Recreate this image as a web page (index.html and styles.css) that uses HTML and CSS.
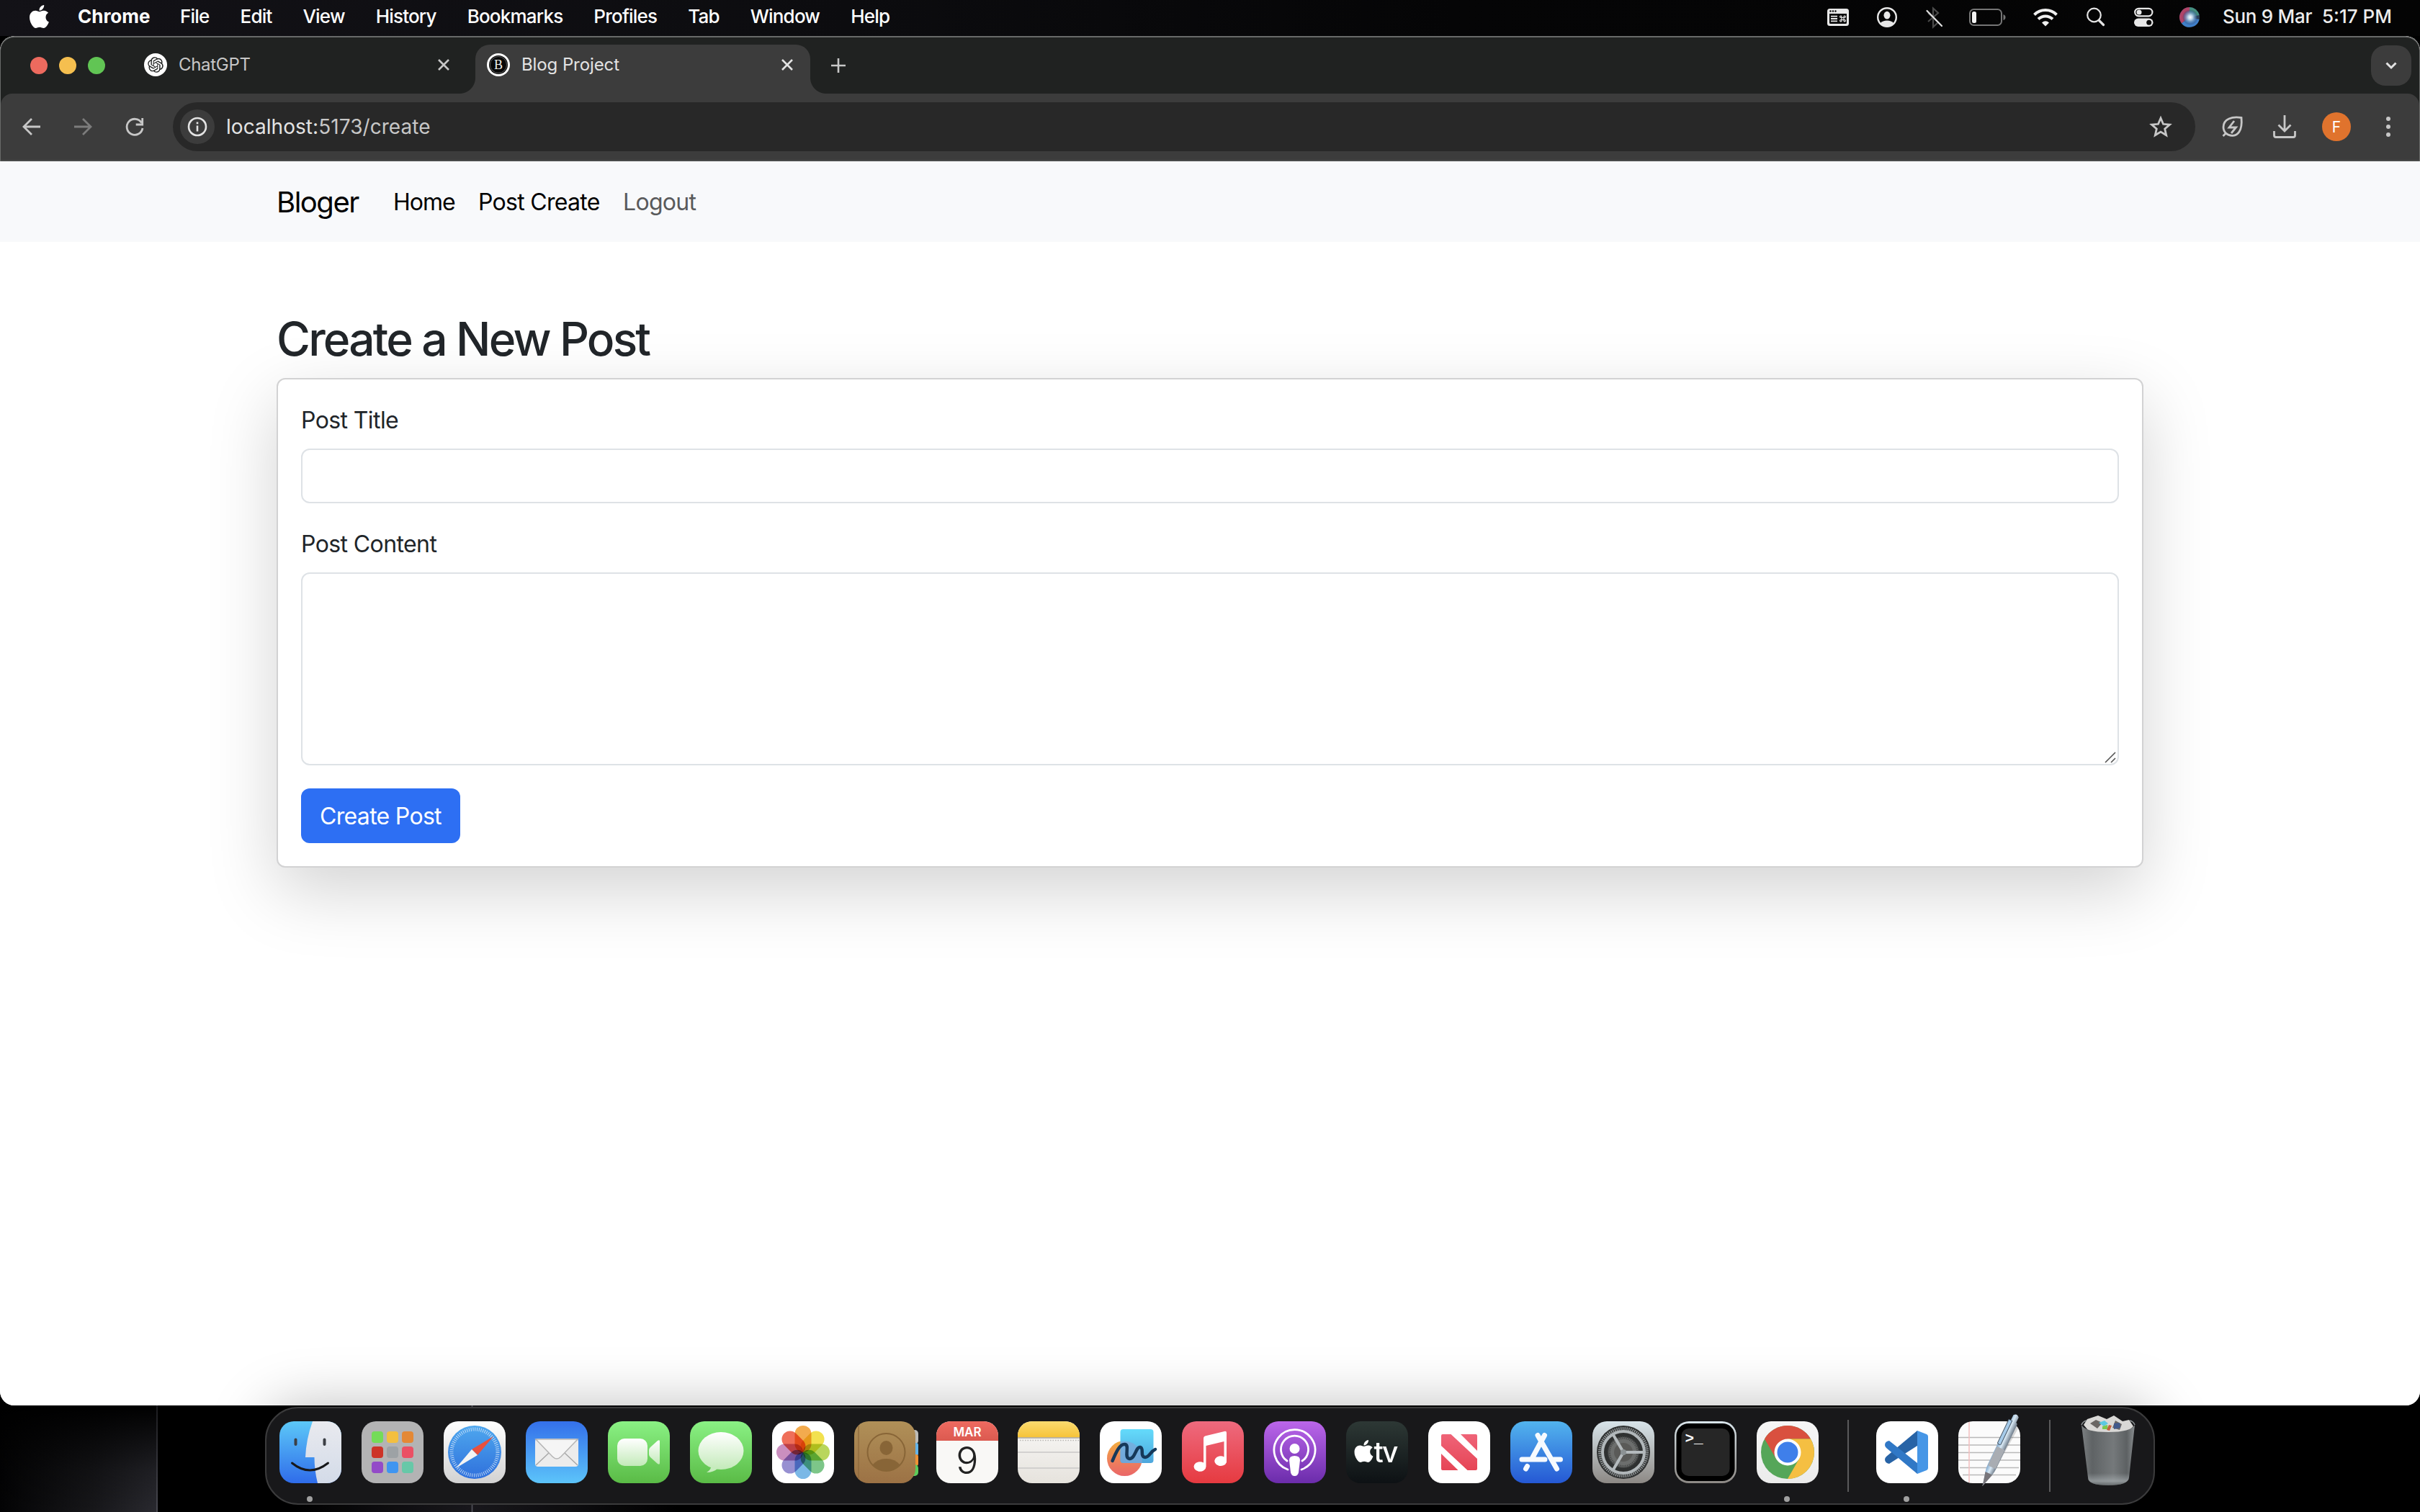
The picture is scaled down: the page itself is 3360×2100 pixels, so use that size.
FILE: index.html
```html
<!DOCTYPE html>
<html lang="en">
<head>
<meta charset="utf-8">
<title>Blog Project</title>
<link rel="stylesheet" href="styles.css">
</head>
<body>
<svg class="defs" width="0" height="0" aria-hidden="true">
  <defs>
    <path id="apple" d="M318.7 268.7c-.2-36.7 16.4-64.4 50-84.8-18.8-26.9-47.2-41.7-84.7-44.6-35.5-2.8-74.3 20.7-88.5 20.7-15 0-49.4-19.7-76.4-19.7C63.3 141.2 4 184.8 4 273.5q0 39.3 14.4 81.2c12.8 36.7 59 126.7 107.2 125.2 25.2-.6 43-17.9 75.8-17.9 31.8 0 48.3 17.9 76.4 17.9 48.6-.7 90.4-82.5 102.6-119.3-65.2-30.7-61.7-90-61.7-91.9zm-56.6-164.2c27.3-32.4 24.8-61.9 24-72.5-24.1 1.4-52 16.4-67.9 34.9-17.5 19.8-27.8 44.3-25.6 71.9 26.1 2 49.9-11.4 69.5-34.3z"/>
    <linearGradient id="blueDown" x2="0" y2="1"><stop stop-color="#5cc8f8"/><stop offset="1" stop-color="#2f6cea"/></linearGradient>
    <linearGradient id="blueUp" x2="0" y2="1"><stop stop-color="#3470ea"/><stop offset="1" stop-color="#5cc4fa"/></linearGradient>
    <linearGradient id="pale" x2="0" y2="1"><stop stop-color="#e9eaef"/><stop offset="1" stop-color="#d3dbe8"/></linearGradient>
    <linearGradient id="silver" x2="0" y2="1"><stop stop-color="#fff"/><stop offset="1" stop-color="#d2d2d2"/></linearGradient>
    <linearGradient id="green" x2="0" y2="1"><stop stop-color="#8af184"/><stop offset="1" stop-color="#5abb46"/></linearGradient>
    <linearGradient id="glass" x2="0" y2="1"><stop stop-color="#fff"/><stop offset="1" stop-color="#c3eab9"/></linearGradient>
    <linearGradient id="safari" x2="0" y2="1"><stop stop-color="#4ea7ee"/><stop offset="1" stop-color="#2f70dc"/></linearGradient>
    <linearGradient id="leather" x2="0" y2="1"><stop stop-color="#b09058"/><stop offset="1" stop-color="#9c7245"/></linearGradient>
    <linearGradient id="calRed" x2="0" y2="1"><stop stop-color="#ee6a60"/><stop offset="1" stop-color="#db5a50"/></linearGradient>
    <linearGradient id="yellow" x2="0" y2="1"><stop stop-color="#fbdb70"/><stop offset="1" stop-color="#f6c338"/></linearGradient>
    <linearGradient id="paper" x2="0" y2="1"><stop stop-color="#f9f8f7"/><stop offset="1" stop-color="#e6e3dd"/></linearGradient>
    <linearGradient id="cyan" x2="0" y2="1"><stop stop-color="#64dbfb"/><stop offset="1" stop-color="#4ea6dc"/></linearGradient>
    <linearGradient id="peach" x2="0" y2="1"><stop stop-color="#f2ae3e"/><stop offset=".6" stop-color="#ee7f5c"/><stop offset="1" stop-color="#ea6668"/></linearGradient>
    <linearGradient id="music" x2="0" y2="1"><stop stop-color="#ee6a7e"/><stop offset="1" stop-color="#e63a40"/></linearGradient>
    <linearGradient id="purple" x2="0" y2="1"><stop stop-color="#bb66ea"/><stop offset="1" stop-color="#6b2cab"/></linearGradient>
    <linearGradient id="tv" x2="0" y2="1"><stop stop-color="#2d3835"/><stop offset="1" stop-color="#0d1114"/></linearGradient>
    <linearGradient id="news" x2="0" y2="1"><stop stop-color="#ef6478"/><stop offset="1" stop-color="#e64556"/></linearGradient>
    <linearGradient id="store" x2="0" y2="1"><stop stop-color="#52b4ee"/><stop offset="1" stop-color="#2558d4"/></linearGradient>
    <linearGradient id="steel" x2="0" y2="1"><stop stop-color="#d8e4ea"/><stop offset="1" stop-color="#8d8985"/></linearGradient>
    <linearGradient id="chromeBg" x2="0" y2="1"><stop stop-color="#f6f6f6"/><stop offset="1" stop-color="#ebebeb"/></linearGradient>
    <linearGradient id="bin" x2="1" y2="0"><stop stop-color="#7c8082"/><stop offset=".2" stop-color="#5f6365"/><stop offset=".6" stop-color="#75797b"/><stop offset=".85" stop-color="#5d6163"/><stop offset="1" stop-color="#8a8e90"/></linearGradient>
    <linearGradient id="binBase" x2="0" y2="1"><stop offset=".8" stop-color="#a9b0b3" stop-opacity="0"/><stop offset=".93" stop-color="#a9b0b3" stop-opacity=".65"/><stop offset="1" stop-color="#5f6466" stop-opacity=".6"/></linearGradient>
    <linearGradient id="pen" x2="1" y2="0"><stop stop-color="#7fa9cf"/><stop offset=".45" stop-color="#d8e8f4"/><stop offset="1" stop-color="#6f7c8a"/></linearGradient>
    <radialGradient id="siri"><stop stop-color="#fff"/><stop offset=".3" stop-color="#b9d3e6"/><stop offset=".75" stop-color="#4a74a8" stop-opacity=".6"/><stop offset="1" stop-color="#224" stop-opacity="0"/></radialGradient>
  </defs>
</svg>
<div class="desktop">

  <header class="menubar">
    <svg class="apple" viewBox="4 32 377 448"><use href="#apple"/></svg>
    <nav class="menus">
      <span class="app">Chrome</span><span>File</span><span>Edit</span><span>View</span><span>History</span><span>Bookmarks</span><span>Profiles</span><span>Tab</span><span>Window</span><span>Help</span>
    </nav>
    <div class="status">
      <svg class="s-kbd" viewBox="0 0 30 28"><rect y="2" width="30" height="24" rx="3.5" fill="#e8e8e8"/><path d="M3 9h24v12.500q0 1.500-1.500 1.500h-21q-1.500 0-1.500-1.500z" fill="#0a0a0a"/><g fill="#0a0a0a"><circle cx="4.500" cy="5.500" r="1.200"/><circle cx="8" cy="5.500" r="1.200"/><circle cx="11.500" cy="5.500" r="1.200"/></g><path d="M5 12.700h9M5 16h9M5 19.300h9" stroke="#e8e8e8" stroke-width="1.800"/><path d="M20 14.500h3v3h-3zM20 14.500h-1.500a1.200 1.200 0 1 1 1.500-1.500zM23 14.500V13a1.200 1.200 0 1 1 1.500 1.500zM23 17.500h1.500a1.200 1.200 0 1 1-1.500 1.500zM20 17.500V19a1.200 1.200 0 1 1-1.500-1.500z" fill="none" stroke="#e8e8e8" stroke-width="1.200"/></svg>
      <svg class="s-user" viewBox="0 0 28 28"><circle cx="14" cy="14" r="12.800" fill="none" stroke="#e8e8e8" stroke-width="2.400"/><ellipse cx="14" cy="11.200" rx="4.500" ry="5.400" fill="#e8e8e8"/><path d="M4.500 22.500C7 19.500 10 18.500 14 18.500s7 1 9.500 4C21 25.500 18 27 14 27s-7-1.500-9.500-4.500z" fill="#e8e8e8"/></svg>
      <svg class="s-bt" viewBox="0 0 24 28" fill="none"><path d="M3 20l14-12-7-6.500v26l7-6.500L3 8" stroke="#4a4a4a" stroke-width="2.200"/><path d="M1.500 5l20.500 21" stroke="#e0e0e0" stroke-width="2.200" stroke-linecap="round"/></svg>
      <svg class="s-bat" viewBox="0 0 51 28"><rect x="1" y="3" width="44" height="22" rx="5.500" fill="none" stroke="#757575" stroke-width="2"/><rect x="4" y="6" width="6" height="16" rx="2.500" fill="#f2f2f2"/><path d="M47.500 10q3 1 3 4t-3 4z" fill="#757575"/></svg>
      <svg class="s-wifi" viewBox="0 0 34 28" fill="none" stroke="#f0f0f0"><path d="M1.500 10.500a22 22 0 0 1 31 0" stroke-width="4"/><path d="M7 16.500a14.200 14.200 0 0 1 20 0" stroke-width="4"/><path d="M17 26.500l-5-5q5-4.500 10 0z" fill="#f0f0f0" stroke="none"/></svg>
      <svg class="s-find" viewBox="0 0 25 28" fill="none" stroke="#e4e4e4"><circle cx="10.500" cy="11" r="9.300" stroke-width="2.200"/><path d="M17.500 18.500l6 6" stroke-width="3.200" stroke-linecap="round"/></svg>
      <svg class="s-cc" viewBox="0 0 27 28"><rect x="1.200" y="1.800" width="24.200" height="10.500" rx="5.200" fill="none" stroke="#e8e8e8" stroke-width="2.200"/><circle cx="7" cy="7" r="3.500" fill="#e8e8e8"/><rect y="15.500" width="26.500" height="11.500" rx="5.700" fill="#e8e8e8"/><circle cx="20.700" cy="21.200" r="3.500" fill="#0a0a0a"/></svg>
      <svg class="s-siri" viewBox="0 0 28 28"><circle cx="14" cy="14" r="14" fill="#2b4158"/><path d="M14 0A14 14 0 0 0 3 22.500L14 14z" fill="#b04468"/><path d="M14 0a14 14 0 0 1 13.500 11L14 14z" fill="#45907f"/><path d="M3 22.500A14 14 0 0 0 27.500 17L14 14z" fill="#3f7fc8"/><circle cx="15" cy="14" r="11" fill="url(#siri)"/></svg>
      <span class="date">Sun 9 Mar</span><span class="time">5:17 PM</span>
    </div>
  </header>

  <main class="window">
    <div class="chrome">
      <div class="tabstrip">
        <div class="lights"><i class="red"></i><i class="amber"></i><i class="lime"></i></div>
        <div class="tab">
          <svg class="fav" viewBox="0 0 32 32"><circle cx="16" cy="16" r="16" fill="#fff"/><g transform="translate(5.200 5.200) scale(.9)"><path fill="#202221" d="M22.2819 9.8211a5.9847 5.9847 0 0 0-.5157-4.9108 6.0462 6.0462 0 0 0-6.5098-2.9A6.0651 6.0651 0 0 0 4.9807 4.1818a5.9847 5.9847 0 0 0-3.9977 2.9 6.0462 6.0462 0 0 0 .7427 7.0966 5.98 5.98 0 0 0 .511 4.9107 6.051 6.051 0 0 0 6.5146 2.9001A5.9847 5.9847 0 0 0 13.2599 24a6.0557 6.0557 0 0 0 5.7718-4.2058 5.9894 5.9894 0 0 0 3.9977-2.9001 6.0557 6.0557 0 0 0-.7475-7.0729zm-9.022 12.6081a4.4755 4.4755 0 0 1-2.8764-1.0408l.1419-.0804 4.7783-2.7582a.7948.7948 0 0 0 .3927-.6813v-6.7369l2.02 1.1686a.071.071 0 0 1 .038.0615v5.5826a4.504 4.504 0 0 1-4.4945 4.4944zm-9.6607-4.1254a4.4708 4.4708 0 0 1-.5346-3.0137l.142.0852 4.783 2.7582a.7712.7712 0 0 0 .7806 0l5.8428-3.3685v2.3324a.0804.0804 0 0 1-.0332.0615L9.74 19.9502a4.4992 4.4992 0 0 1-6.1408-1.6464zM2.3408 7.8956a4.485 4.485 0 0 1 2.3655-1.9728V11.6a.7664.7664 0 0 0 .3879.6765l5.8144 3.3543-2.0201 1.1685a.0757.0757 0 0 1-.071 0l-4.8303-2.7865A4.504 4.504 0 0 1 2.3408 7.872zm16.5963 3.8558L13.1038 8.364 15.1192 7.2a.0757.0757 0 0 1 .071 0l4.8303 2.7913a4.4944 4.4944 0 0 1-.6765 8.1042v-5.6772a.79.79 0 0 0-.407-.667zm2.0107-3.0231l-.142-.0852-4.7735-2.7818a.7759.7759 0 0 0-.7854 0L9.409 9.2297V6.8974a.0662.0662 0 0 1 .0284-.0615l4.8303-2.7866a4.4992 4.4992 0 0 1 6.6802 4.66zM8.3065 12.863l-2.02-1.1638a.0804.0804 0 0 1-.038-.0567V6.0742a4.4992 4.4992 0 0 1 7.3757-3.4537l-.142.0805L8.704 5.459a.7948.7948 0 0 0-.3927.6813zm1.0976-2.3654l2.602-1.4998 2.6069 1.4998v2.9994l-2.5974 1.4997-2.6067-1.4997Z"/></g></svg>
          <span class="title t1">ChatGPT</span>
          <svg class="x" viewBox="0 0 16 16"><path d="M1 1l14 14M15 1L1 15"/></svg>
        </div>
        <div class="tab active">
          <svg class="fav" viewBox="0 0 32 32"><circle cx="16" cy="16" r="16" fill="#fff"/><circle cx="16" cy="16" r="13" fill="#080808"/><circle cx="16" cy="16" r="11.500" fill="none" stroke="#777" stroke-width=".8"/><text x="16" y="22" text-anchor="middle" class="fav-b">B</text></svg>
          <span class="title t2">Blog Project</span>
          <svg class="x" viewBox="0 0 16 16"><path d="M1 1l14 14M15 1L1 15"/></svg>
        </div>
        <svg class="plus" viewBox="0 0 20 20"><path d="M10 0v20M0 10h20"/></svg>
        <div class="tabsearch"><svg viewBox="0 0 16 10"><path d="M1.500 1.500L8 8l6.500-6.500"/></svg></div>
      </div>
      <div class="toolbar">
        <svg class="back" viewBox="0 0 26 26"><path d="M25 13H2M13 2L2 13l11 11"/></svg>
        <svg class="fwd" viewBox="0 0 26 26"><path d="M1 13h23M13 2l11 11-11 11"/></svg>
        <svg class="reload" viewBox="0 0 26 26"><path d="M22.500 7.500A11 11 0 1 0 24 15M23.700 1v9h-9"/></svg>
        <div class="omnibox">
          <span class="info"><svg viewBox="0 0 28 28"><circle cx="14" cy="14" r="12"/><path d="M14 12.500v8M14 7.500v2.800"/></svg></span>
          <span class="url"><b>localhost:</b>5173/create</span>
          <svg class="star" viewBox="0 0 30 30"><path d="M15 3l3.500 8.300 9 .8-6.800 5.900 2 8.800-7.700-4.700-7.700 4.700 2-8.800-6.800-5.900 9-.8z"/></svg>
        </div>
        <svg class="leaf" viewBox="0 0 30 30"><path d="M27 2.500C14 .5 2 4 2 15.500c0 4 1.500 6.500 3.500 8.500C11 29 20 28.500 24 22c4-6 3.500-14 3-19.500zM6.500 23L1.500 28M17 7l-7 9h9.500l-6.500 8"/></svg>
        <svg class="down" viewBox="0 0 32 32"><path d="M16 0v22M7.500 13.500L16 22l8.500-8.500M1.500 22v6q0 2.500 2.500 2.500h24q2.500 0 2.500-2.500v-6"/></svg>
        <span class="avatar">F</span>
        <svg class="dots" viewBox="0 0 6 28"><circle cx="3" cy="3" r="3"/><circle cx="3" cy="14" r="3"/><circle cx="3" cy="25" r="3"/></svg>
      </div>
    </div>

    <div class="page">
      <nav class="navbar"><a class="brand">Bloger</a><a class="n1">Home</a><a class="n2">Post Create</a><a class="n3">Logout</a></nav>
      <section class="container">
        <h2>Create a New Post</h2>
        <form class="card">
          <label class="l1" for="title">Post Title</label>
          <input id="title" type="text">
          <label class="l2" for="content">Post Content</label>
          <div class="area"><textarea id="content"></textarea><svg class="grip" viewBox="0 0 16 16"><path d="M1 15L15 1M9 15l6-6"/></svg></div>
          <button type="button"><span>Create Post</span></button>
        </form>
      </section>
    </div>
  </main>

  <footer class="shelf">
    <div class="dock">
      <div class="item run"><svg viewBox="0 0 86 86"><rect width="86" height="86" fill="url(#blueDown)"/><path d="M46 0q-9 25-10 50h12.500q0 18 4.500 36H86V0z" fill="url(#pale)"/><path d="M22.500 25.500v6.500M62.500 25.500v6.500" stroke="#3c3f45" stroke-width="4" stroke-linecap="round"/><path d="M17.500 58q24.500 20 50 0" fill="none" stroke="#17181a" stroke-width="3" stroke-linecap="round"/></svg></div>
      <div class="item"><svg viewBox="0 0 86 86"><rect width="86" height="86" fill="#b3b3b4"/><g><rect x="14" y="14" width="16" height="16" rx="4" fill="#74dc58"/><rect x="35" y="14" width="16" height="16" rx="4" fill="#f3bf40"/><rect x="56" y="14" width="16" height="16" rx="4" fill="#e48835"/><rect x="14" y="35" width="16" height="16" rx="4" fill="#cd3428"/><rect x="35" y="35" width="16" height="16" rx="4" fill="#9da2a5"/><rect x="56" y="35" width="16" height="16" rx="4" fill="#ea5064"/><rect x="14" y="56" width="16" height="16" rx="4" fill="#934bc8"/><rect x="35" y="56" width="16" height="16" rx="4" fill="#3f95f0"/><rect x="56" y="56" width="16" height="16" rx="4" fill="#67c8a8"/></g></svg></div>
      <div class="item"><svg viewBox="0 0 86 86"><rect width="86" height="86" fill="url(#silver)"/><circle cx="43" cy="43" r="37" fill="url(#safari)"/><circle cx="43" cy="43" r="32" fill="none" stroke="#dcebfa" stroke-width="5" stroke-dasharray="1 1.793" opacity=".8"/><path d="M69 21L47 47l-8-8z" fill="#e8503f"/><path d="M17 65l22-26 8 8z" fill="#f4f4f4"/></svg></div>
      <div class="item"><svg viewBox="0 0 86 86"><rect width="86" height="86" fill="url(#blueUp)"/><rect x="13" y="24" width="60" height="39" rx="4" fill="#ececec"/><path d="M14 61l18-17M72 61L54 44" stroke="#a8a8a8" stroke-width="1.500"/><path d="M14 25l23 24q6 6 12 0l23-24z" fill="#f5f5f5" stroke="#b5b5b5" stroke-width="1.500"/></svg></div>
      <div class="item"><svg viewBox="0 0 86 86"><rect width="86" height="86" fill="url(#green)"/><rect x="13" y="24" width="42" height="38" rx="10" fill="url(#glass)"/><path d="M57 40q0-2 2-4l10-9q3-2 3 1v30q0 3-3 1l-10-9q-2-2-2-4z" fill="url(#glass)"/></svg></div>
      <div class="item"><svg viewBox="0 0 86 86"><rect width="86" height="86" fill="url(#green)"/><path d="M23 71q6-3 7-10l9 4q-6 6-16 6z" fill="#c9ecc0"/><ellipse cx="43" cy="41" rx="31.500" ry="26" fill="url(#glass)"/></svg></div>
      <div class="item"><svg viewBox="0 0 86 86"><rect width="86" height="86" fill="#fff"/><g class="petals"><rect x="31.500" y="6" width="23" height="37" rx="11.500" fill="#f2a23a"/><rect x="31.500" y="6" width="23" height="37" rx="11.500" fill="#f1de3c" transform="rotate(45 43 43)"/><rect x="31.500" y="6" width="23" height="37" rx="11.500" fill="#b2d24a" transform="rotate(90 43 43)"/><rect x="31.500" y="6" width="23" height="37" rx="11.500" fill="#6fc07c" transform="rotate(135 43 43)"/><rect x="31.500" y="6" width="23" height="37" rx="11.500" fill="#6cb0e4" transform="rotate(180 43 43)"/><rect x="31.500" y="6" width="23" height="37" rx="11.500" fill="#8c84cc" transform="rotate(225 43 43)"/><rect x="31.500" y="6" width="23" height="37" rx="11.500" fill="#c583b8" transform="rotate(270 43 43)"/><rect x="31.500" y="6" width="23" height="37" rx="11.500" fill="#ee5f48" transform="rotate(315 43 43)"/></g></svg></div>
      <div class="item open"><svg viewBox="0 0 86 86"><rect x="70" y="12" width="19" height="20" rx="5" fill="#bdbcb8"/><rect x="70" y="30" width="19" height="18" rx="3" fill="#63b4ea"/><rect x="70" y="46" width="19" height="16" rx="3" fill="#ee9136"/><rect x="70" y="60" width="19" height="16" rx="5" fill="#5ccb5a"/><rect width="85" height="86" rx="20" fill="url(#leather)"/><path d="M6 6v74" stroke="#8c683c" stroke-width="2" opacity=".6"/><circle cx="44.500" cy="43" r="26" fill="none" stroke="#886537" stroke-width="2"/><ellipse cx="44.500" cy="37" rx="9" ry="10" fill="#886537"/><path d="M25 61q7-9 19.500-9T64 61q-8 8-19.500 8T25 61z" fill="#886537"/></svg></div>
      <div class="item"><svg viewBox="0 0 86 86"><rect width="86" height="86" fill="#f9f8f6"/><rect width="86" height="27" fill="url(#calRed)"/><text x="43" y="21" text-anchor="middle" class="cal-m">MAR</text><text x="43" y="72.500" text-anchor="middle" class="cal-d">9</text></svg></div>
      <div class="item"><svg viewBox="0 0 86 86"><rect width="86" height="86" fill="url(#paper)"/><rect width="86" height="22.500" fill="url(#yellow)"/><path d="M0 23h86" stroke="#a8a49b" stroke-width="1.500"/><path d="M3 26.500h83" stroke="#b9b7b2" stroke-width="1.500" stroke-dasharray="1.500 2"/><path d="M0 43h86M0 65h86" stroke="#c9c7c8" stroke-width="1.500"/></svg></div>
      <div class="item"><svg viewBox="0 0 86 86"><rect width="86" height="86" fill="#fff"/><ellipse cx="34.500" cy="51.500" rx="24.500" ry="24.500" fill="url(#peach)"/><rect x="28.500" y="11" width="46" height="47" rx="4" fill="url(#cyan)"/><path d="M28.500 28q16-3 26 10 6 9 4 20H33q-4.500 0-4.500-4z" fill="#7fa7d8" opacity=".7"/><path d="M17.500 55C23 42 28 31 35 32s-2 19 6 20 9-17 15-16-1 13 7 14c6 0 7-8 14-11" fill="none" stroke="#16395a" stroke-width="4.500" stroke-linecap="round"/></svg></div>
      <div class="item"><svg viewBox="0 0 86 86"><rect width="86" height="86" fill="url(#music)"/><path d="M30 24q0-3 3-3.700l26-6.300q3-.7 3 2v41a8.500 6.800 0 1 1-3.500-7.500V28l-25 6v29a8.500 6.800 0 1 1-3.500-5.500z" fill="#fff"/></svg></div>
      <div class="item"><svg viewBox="0 0 86 86"><rect width="86" height="86" fill="url(#purple)"/><g fill="none" stroke="#fff" stroke-width="2.800" stroke-linecap="round"><path d="M33 67a28.500 28.500 0 1 1 19 0"/><path d="M32 55a19 19 0 1 1 21 0"/></g><circle cx="42.500" cy="38" r="7" fill="#fff"/><path d="M35 54q0-6 7.500-6t7.500 6l-2 17q-1 5-5.500 5t-5.500-5z" fill="#fff"/></svg></div>
      <div class="item"><svg viewBox="0 0 86 86"><rect width="86" height="86" fill="url(#tv)"/><use href="#apple" fill="#fff" transform="translate(11.500 26) scale(.069) translate(-4 -32)"/><text x="38.500" y="56.500" class="tv" textLength="34">tv</text></svg></div>
      <div class="item"><svg viewBox="0 0 86 86"><rect width="86" height="86" fill="#fff"/><path d="M20 18h11.500L68 52v14q0 2-2 2H54.500L18 34V20q0-2 2-2zM45 18h21q2 0 2 2v21zM18 45v21q0 2 2 2h21.500z" fill="url(#news)"/></svg></div>
      <div class="item"><svg viewBox="0 0 86 86"><rect width="86" height="86" fill="url(#store)"/><g stroke="#f6fafe" stroke-width="7" stroke-linecap="round"><path d="M16 53h32M60 53h9.500M47.500 19.500L31 50M23.500 62.500l-2 3.500M38 19.500L64.500 66"/></g></svg></div>
      <div class="item"><svg viewBox="0 0 86 86"><rect width="86" height="86" fill="url(#steel)"/><circle cx="43" cy="43" r="37" fill="#2f3131"/><circle cx="43" cy="43" r="33" fill="none" stroke="#8f9496" stroke-width="4" stroke-dasharray="1.500 1.300"/><circle cx="43" cy="43" r="29" fill="none" stroke="#b1b7ba" stroke-width="4"/><circle cx="43" cy="43" r="21" fill="#6c6e6d"/><circle cx="43" cy="43" r="20" fill="none" stroke="#4a4c4c" stroke-width="4" stroke-dasharray="1.500 1.200"/><circle cx="43" cy="43" r="13" fill="#5a5a58"/><path d="M43 43h27M43 43L29 19M43 43L29 67" stroke="#b4babd" stroke-width="4"/><circle cx="43" cy="43" r="4" fill="#8c9294"/></svg></div>
      <div class="item"><svg viewBox="0 0 86 86"><rect width="86" height="86" fill="url(#steel)"/><rect x="2.500" y="3" width="81" height="80" rx="17" fill="#000"/><rect x="9.500" y="10" width="67" height="66" rx="10" fill="#262626"/><text x="14.500" y="30" class="term">&gt;_</text></svg></div>
      <div class="item run"><svg viewBox="0 0 86 86"><rect width="86" height="86" fill="url(#chromeBg)"/><circle cx="43" cy="43" r="37" fill="#55a659"/><path d="M11 24.500A37 37 0 0 1 75 24.500H43L27 52z" fill="#d9503f"/><path d="M75 24.500A37 37 0 0 1 43 80L59 52 43 24.500z" fill="#f5bf42"/><circle cx="43" cy="43" r="18.500" fill="#fff"/><circle cx="43" cy="43" r="14.500" fill="#3f7fea"/></svg></div>
      <i class="sep s1"></i>
      <div class="item run"><svg viewBox="0 0 86 86"><rect width="86" height="86" fill="#fff"/><path d="M57 13v21L18 59q-6-1-6-6 0-2 2-4z" fill="#2763a6"/><path d="M18 27l39 31v15L14 37q-2-2-2-4 0-5 6-6z" fill="#3078c6"/><path d="M57 13l13 5q2 1 2 3v44q0 2-2 3l-13 5z" fill="#4696e6"/></svg></div>
      <div class="item open"><svg viewBox="0 0 86 86"><rect width="86" height="86" rx="20" fill="#fbfbfb"/><path d="M0 22.500h86M0 33h86M0 43.500h86M0 54h86M2 64.500h82M6 74.500h74" stroke="#b9b9b9" stroke-width="1.300"/><path d="M15 1v84" stroke="#f3bfbf" stroke-width="1.500"/><path d="M36 86L48 56l30-54 5 8-28 50z" fill="#555" opacity=".22"/><g transform="translate(33.500 90) rotate(25.500) scale(1.250 1.170)"><path d="M0 0l-4-17q-1-4-1-9v-56q0-3 2-3v-7q3-4 6.500 0v7q2 0 2 3v56q0 5-1 9z" fill="url(#pen)"/><path d="M0 0l-4-17h8.500z" fill="#77757a"/><path d="M-4.500-25h9.500v-25h-9.500z" fill="#a9adb3"/><path d="M-5.500-54v-31h4v31q-2 2-4 0z" fill="#a6cbea" stroke="#4c5a68" stroke-width=".8"/></g></svg></div>
      <i class="sep s2"></i>
      <svg class="trash" viewBox="0 0 76 99"><path d="M4 14L9 6l15-5 12 5 10-5 12 8 9-2 6 9-10 10H14z" fill="#d9d8d6"/><path d="M13 12l8-5 9 4-7 8zM44 18l4-10 9 5-3 8z" fill="#6a6664"/><path d="M25 11l8-3 5 4-6 4z" fill="#5cc8e0"/><path d="M30 16l7-2 1 6h-8z" fill="#7cc850"/><path d="M46 12l8-1 1 7-9 2z" fill="#41598c"/><path d="M39 14l4 1-3 7-4-1z" fill="#c4603c"/><path d="M1 14q5 10 37 10t37-10l-8 73q-1 11-29 11T10 87z" fill="url(#bin)"/><path d="M1 14q5 10 37 10t37-10l-8 73q-1 11-29 11T10 87z" fill="url(#binBase)"/><path d="M1 14Q3 9 8 8M75 14Q73 9 68 8" fill="none" stroke="#8d9294" stroke-width="1.500"/></svg>
    </div>
  </footer>
</div>
</body>
</html>
```
FILE: styles.css
```css
* { box-sizing: border-box; }
body { margin: 0; background: #000; font-family: Inter, "Liberation Sans", sans-serif; }
svg { display: block; flex: none; overflow: visible; }
.defs { position: absolute; }
.desktop { width: 3360px; height: 2100px; display: flex; flex-direction: column; overflow: hidden; background: #000; }

/* menu bar */
.menubar { height: 50px; flex: none; display: flex; align-items: flex-start; padding-left: 41px; color: #fff; font-size: 26px; line-height: 46px; font-weight: 500; white-space: nowrap; background: linear-gradient(90deg, #131217, #0c0c0f 35%, #050506 60%, #040404); }
.apple { width: 27px; height: 32px; margin-top: 7px; fill: #fff; }
.menus { display: flex; gap: 43px; margin-left: 40px; letter-spacing: -0.8px; }
.menus .app { width: 99px; font-weight: 700; letter-spacing: 0; }
.status { display: flex; margin-left: auto; padding-right: 37px; color: #ececec; }
.status svg { height: 28px; margin-top: 10px; }
.s-kbd { width: 30px; }
.s-user { width: 28px; margin-left: 39px; }
.s-bt { width: 24px; margin-left: 40px; }
.s-bat { width: 51px; margin-left: 36px; }
.s-wifi { width: 34px; margin-left: 38px; }
.s-find { width: 25px; margin-left: 40px; }
.s-cc { width: 27px; margin-left: 41px; }
.s-siri { width: 28px; margin-left: 36px; }
.date { width: 122px; margin-left: 32px; letter-spacing: -0.3px; }
.time { width: 99px; margin-left: 16px; letter-spacing: 0; }

/* browser window */
.window { height: 1902px; flex: none; display: flex; flex-direction: column; border-radius: 20px; overflow: hidden; background: #fff; }
.chrome { height: 174px; flex: none; border: solid #686a69; border-width: 2px 1px 0; border-radius: 20px 20px 0 0; background: #202221; overflow: hidden; }
.tabstrip { height: 78px; display: flex; align-items: center; padding: 0 11px 0 41px; }
.lights { display: flex; gap: 16px; }
.lights i { width: 24px; height: 24px; border-radius: 50%; }
.red { background: #ed6a5e; }
.amber { background: #f5bf4f; }
.lime { background: #61c554; }
.tab { display: flex; align-items: center; width: 460px; height: 68px; margin-top: 10px; padding: 0 36px 12px 0; margin-left: 54px; }
.tab .fav { width: 32px; height: 32px; }
.fav-b { font: 18px "Liberation Serif", serif; fill: #eee; }
.title { margin-left: 16px; font-size: 24px; line-height: 32px; white-space: nowrap; color: #c7c7c7; }
.t1 { letter-spacing: -0.3px; }
.t2 { letter-spacing: -0.1px; }
.x { width: 16px; height: 16px; margin-left: auto; }
.x path, .plus path { fill: none; stroke: #c7c7c7; stroke-width: 2.6; }
.active { position: relative; width: 465px; margin-left: 0; padding: 0 24px 12px 16px; border-radius: 20px 20px 0 0; background: #3c3c3c; }
.active .title { color: #e3e3e3; }
.active .x path { stroke: #e3e3e3; }
.active::before, .active::after { content: ""; position: absolute; bottom: 0; width: 22px; height: 22px; }
.active::before { right: 100%; background: radial-gradient(circle at 0 0, transparent 21.500px, #3c3c3c 22.500px); }
.active::after { left: 100%; background: radial-gradient(circle at 100% 0, transparent 21.500px, #3c3c3c 22.500px); }
.plus { width: 20px; height: 20px; margin: 0 0 0 29px; }
.tabsearch { display: flex; align-items: center; justify-content: center; width: 56px; height: 56px; margin-left: auto; border-radius: 20px; background: #3c3c3c; }
.tabsearch svg { width: 16px; height: 10px; fill: none; stroke: #e3e3e3; stroke-width: 3; }
.toolbar { height: 94px; display: flex; align-items: center; padding: 0 40px 0 30px; border-radius: 16px 16px 0 0; background: #3c3c3c; border-bottom: 2px solid #484a49; }
.toolbar > svg { fill: none; stroke: #c7c7c7; stroke-width: 2.8; }
.back, .fwd, .reload { width: 26px; height: 26px; }
.toolbar .fwd { margin-left: 45px; stroke: #7c7c7c; }
.reload { margin-left: 46px; }
.omnibox { display: flex; align-items: center; width: 2808px; height: 68px; margin-left: 40px; padding: 0 33px 0 10px; border-radius: 34px; background: #282828; }
.info { display: flex; align-items: center; justify-content: center; width: 48px; height: 48px; border-radius: 50%; background: #3c3c3c; }
.info svg { width: 28px; height: 28px; fill: none; stroke: #e3e3e3; stroke-width: 2.6; }
.url { margin-left: 16px; font-size: 28px; line-height: 40px; color: #c7c7c7; letter-spacing: 0.05px; }
.url b { font-weight: 400; color: #e3e3e3; }
.star { width: 30px; height: 30px; margin-left: auto; fill: none; stroke: #c7c7c7; stroke-width: 2.8; }
.leaf { width: 30px; height: 30px; margin-left: 37px; }
.down { width: 32px; height: 32px; margin-left: 41px; }
.avatar { display: flex; align-items: center; justify-content: center; width: 40px; height: 40px; margin-left: 36px; border-radius: 50%; background: #e0732d; color: #fff; font-size: 21px; }
.toolbar > .dots { width: 6px; height: 28px; margin-left: auto; fill: #c7c7c7; stroke: none; }

/* page */
.page { flex: 1; background: #fff; color: #212529; font-size: 32px; }
.navbar { display: flex; align-items: center; height: 112px; padding: 2px 384px 0; line-height: 48px; background: #f8f9fb; color: #000; white-space: nowrap; }
.brand { width: 115px; margin-right: 47px; font-size: 40px; letter-spacing: -1.5px; }
.n1 { width: 86px; margin-right: 32px; letter-spacing: -1px; }
.n2 { width: 169px; margin-right: 32px; letter-spacing: -0.7px; }
.n3 { color: #595a5b; letter-spacing: -0.7px; }
.container { margin: 96px 384px 0; }
h2 { margin: 0 0 16px; height: 77px; font-size: 64px; line-height: 78px; font-weight: 500; letter-spacing: -2.8px; white-space: nowrap; }
.card { display: flex; flex-direction: column; height: 680px; padding: 32px; border: 2px solid #d2d2d3; border-radius: 12px; background: #fff; box-shadow: 0 32px 96px rgba(0, 0, 0, .175); }
label { height: 48px; margin-bottom: 16px; line-height: 50px; white-space: nowrap; letter-spacing: -0.6px; }
input, textarea { display: block; width: 100%; margin: 0 0 32px; padding: 12px 24px; border: 2px solid #dee2e6; border-radius: 12px; background: #fff; outline: none; }
input { height: 76px; flex: none; }
.area { position: relative; height: 268px; margin-bottom: 32px; }
textarea { height: 268px; resize: none; }
.grip { position: absolute; right: 4px; bottom: 3px; width: 16px; height: 16px; fill: none; stroke: #555; stroke-width: 1.6; }
button { width: 221px; height: 76px; padding: 2px 0 0; border: 0; border-radius: 12px; background: #2d6ff3; color: #fff; font: 400 32px/74px Inter, sans-serif; letter-spacing: -0.7px; white-space: nowrap; }

/* dock */
.shelf { position: relative; z-index: 1; flex: 1; padding-top: 2px; background:
  linear-gradient(180deg, #000 0, rgba(0, 0, 0, .25) 90px, transparent) 0 0 / 217px 100% no-repeat,
  linear-gradient(90deg, #030304, #17171a 60%, #29292f) 0 0 / 217px 100% no-repeat,
  linear-gradient(180deg, #1c1c1f, #47474f) 217px 0 / 2px 100% no-repeat,
  linear-gradient(90deg, transparent, #5c5c66 50%, transparent) 654px 0 / 3px 100% no-repeat,
  linear-gradient(90deg, #000 400px, #1c1b20 655px, #000 950px); }
.dock { display: flex; align-items: flex-start; width: 2624px; height: 136px; margin: 0 auto; padding: 18px 18px 0; border: 2px solid #3b3b3c; border-radius: 46px; background: #18181a; box-shadow: 0 0 80px rgba(0, 0, 0, .27); }
.item { position: relative; width: 86px; height: 86px; margin-right: 27.950px; flex: none; }
.item > svg { width: 86px; height: 86px; border-radius: 20px; overflow: hidden; }
.item.open > svg { overflow: visible; border-radius: 0; }
.run::after { content: ""; position: absolute; left: 38px; top: 104px; width: 8px; height: 8px; border-radius: 50%; background: #a0a0a0; }
.petals rect { mix-blend-mode: multiply; opacity: .9; }
.cal-m { font: 600 17px Inter, sans-serif; fill: #fff; }
.cal-d { font: 300 52px Inter, sans-serif; fill: #222; }
.tv { font: 500 39px Inter, sans-serif; fill: #fff; }
.term { font: 700 21px "Liberation Mono", monospace; fill: #fff; }
.sep { width: 2px; height: 100px; margin-top: -2px; background: #5a5a5b; flex: none; }
.s1 { margin-left: 12px; margin-right: 38px; }
.s2 { margin-left: 12px; margin-right: 42px; }
.trash { width: 76px; height: 99px; margin-top: -9px; }
```
